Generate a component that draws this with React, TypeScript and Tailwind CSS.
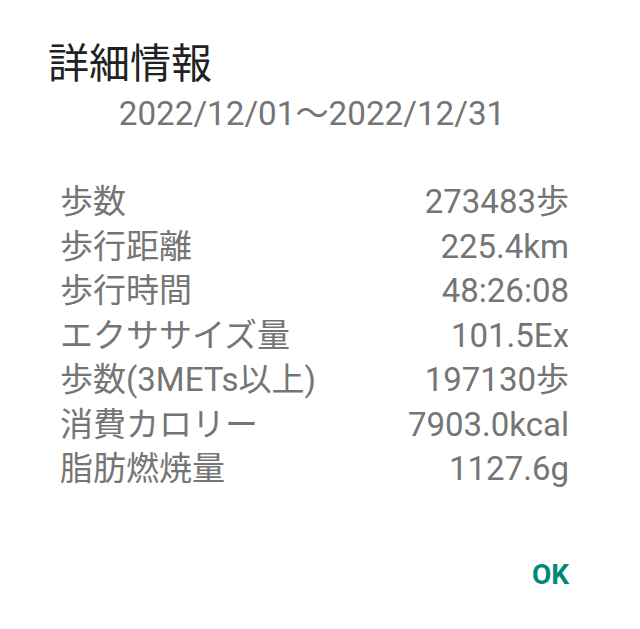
const rows: [string, string][] = [
  ["歩数", "273483歩"],
  ["歩行距離", "225.4km"],
  ["歩行時間", "48:26:08"],
  ["エクササイズ量", "101.5Ex"],
  ["歩数(3METs以上)", "197130歩"],
  ["消費カロリー", "7903.0kcal"],
  ["脂肪燃焼量", "1127.6g"],
];

export default function App() {
  return (
    <div
      className="w-[640px] h-[629px] bg-white flex flex-col"
      style={{ fontFamily: 'Roboto, "Noto Sans CJK JP", sans-serif' }}
    >
      <h1 className="pl-[48px] pt-[41px] text-[41px] leading-[47px] text-[#212121]">
        詳細情報
      </h1>
      <div className="pl-[48px] pr-[64px] mt-[6px] text-center text-[33.2px] leading-[40px] text-[#757575]">
        2022/12/01～2022/12/31
      </div>
      <div className="mt-[46px] pl-[60px] pr-[71px] flex flex-col text-[33px] leading-[44.5px] text-[#757575]">
        {rows.map(([label, value]) => (
          <div key={label} className="flex justify-between">
            <span>{label}</span>
            <span>{value}</span>
          </div>
        ))}
      </div>
      <div className="mt-auto mb-[39px] pr-[71px] flex justify-end">
        <button className="text-[28px] font-bold text-[#00897b] leading-[30px]">
          OK
        </button>
      </div>
    </div>
  );
}
